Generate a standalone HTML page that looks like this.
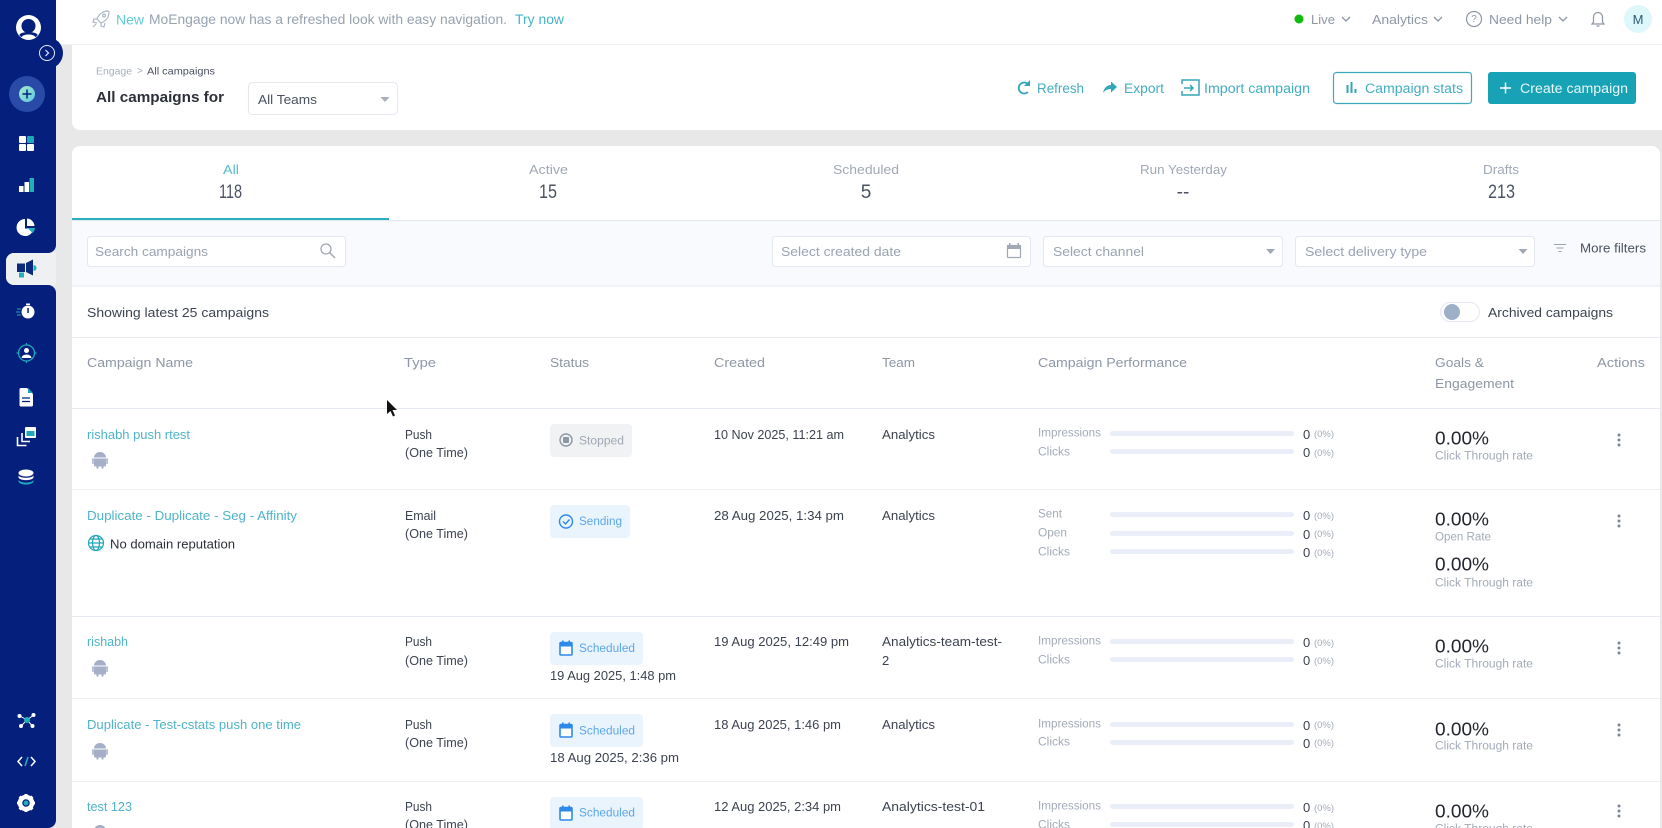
<!DOCTYPE html>
<html><head><meta charset="utf-8"><title>All campaigns</title>
<style>
html,body{margin:0;padding:0;width:1662px;height:828px;overflow:hidden;background:#e8e8e8}
svg{display:block;font-family:"Liberation Sans",sans-serif;filter:blur(.35px)}
text{dominant-baseline:central;white-space:pre;transform:translateY(.7px)}
.n{font-size:13px;fill:#4fb4c8}
.b{font-size:13px;fill:#3c4350}
.l{font-size:11.5px;fill:#a3abb8}
.h{font-size:13px;fill:#8e97a6}
.z{font-size:13px;fill:#3c4350}
.p{font-size:9.5px;fill:#a3abb8}
.r{font-size:18px;fill:#22262e}
.s{font-size:11.5px;fill:#a3abb8}
.t{font-size:13px;fill:#a0a8b5}
.c{font-size:19px;fill:#4a5261}
.f{font-size:13px;fill:#9aa3b2}
.a{font-size:13.5px;fill:#42aec0}
.g{font-size:13px;fill:#8e97a6}
.bar{fill:#e9eef8}
</style></head><body>
<svg width="1662" height="828" viewBox="0 0 1662 828" xmlns="http://www.w3.org/2000/svg">
<defs>
<g id="and"><path d="M-6 -2.5a6 5.5 0 0 1 12 0z M-6 -1.5h12v6.5a1.500 1.500 0 0 1-1.500 1.500h-9a1.500 1.500 0 0 1-1.500-1.500z" fill="#a5b0c8"/><rect x="-7.800" y="-2" width="1.500" height="6" rx=".8" fill="#a5b0c8"/><rect x="6.300" y="-2" width="1.500" height="6" rx=".8" fill="#a5b0c8"/><rect x="-3.500" y="6" width="2" height="2.500" fill="#a5b0c8"/><rect x="1.500" y="6" width="2" height="2.500" fill="#a5b0c8"/></g>
<g id="dots" fill="#7d8696"><circle cy="-5" r="1.500"/><circle r="1.500"/><circle cy="5" r="1.500"/></g>
<g id="cal"><rect x="-6" y="-5.500" width="12" height="12.500" rx="1" fill="#fff" stroke="#2d8ae8" stroke-width="1.600"/><rect x="-6" y="-5.500" width="12" height="4" fill="#2d8ae8"/><rect x="-4" y="-7.500" width="1.600" height="3" fill="#2d8ae8"/><rect x="2.400" y="-7.500" width="1.600" height="3" fill="#2d8ae8"/></g>
<path id="chev" d="M-4 -2l4 4 4-4" fill="none" stroke="#8e97a6" stroke-width="1.300"/>
<linearGradient id="pl" x1="0" y1="0" x2="1" y2="1"><stop offset="0" stop-color="#a8ecc8"/><stop offset="1" stop-color="#5cc6e8"/></linearGradient>
</defs>
<rect width="1662" height="828" fill="#e8e8e8"/>
<rect width="1662" height="44" fill="#fff"/>
<rect x="56" y="44" width="1606" height="1" fill="#eef0f3"/>
<g fill="none" stroke="#aeb8c6" stroke-width="1.200"><path d="M108 11c-5 0-9 3-11 8l4 4c5-2 8-6 8-11z"/><path d="M97 19l-3 0-1 3 4 1"/><path d="M101 23v3l3 1 1-4"/><path d="M96 24l-3 3"/><circle cx="104" cy="15.500" r="1.400"/></g>
<text x="116" y="19" font-size="14" fill="#5ecbdd" textLength="28" lengthAdjust="spacingAndGlyphs">New</text>
<text x="149" y="19" font-size="13.500" fill="#97a2b0" textLength="358" lengthAdjust="spacingAndGlyphs">MoEngage now has a refreshed look with easy navigation.</text>
<text x="515" y="19" font-size="13.500" fill="#45b3c7" textLength="49" lengthAdjust="spacingAndGlyphs">Try now</text>
<circle cx="1299" cy="19" r="4.500" fill="#0cbb0c"/>
<text x="1311" y="19" class="g" textLength="24" lengthAdjust="spacingAndGlyphs">Live</text><use href="#chev" x="1346" y="19"/>
<text x="1372" y="19" class="g" textLength="56" lengthAdjust="spacingAndGlyphs">Analytics</text><use href="#chev" x="1438" y="19"/>
<circle cx="1474" cy="19" r="7.500" fill="none" stroke="#8e97a6" stroke-width="1.200"/><text x="1474" y="19" font-size="10" fill="#8e97a6" text-anchor="middle">?</text>
<text x="1489" y="19" class="g" textLength="63" lengthAdjust="spacingAndGlyphs">Need help</text><use href="#chev" x="1563" y="19"/>
<path d="M1598 12.500a4.500 4.500 0 0 1 4.500 4.500v5l1.500 2h-12l1.500-2v-5a4.500 4.500 0 0 1 4.500-4.500zM1596.500 26h3" fill="none" stroke="#8e97a6" stroke-width="1.200"/>
<circle cx="1638" cy="19" r="14" fill="#def7fb"/><text x="1638" y="19" font-size="13" fill="#2c5a78" text-anchor="middle">M</text>

<path d="M72 45H1662V130H80a8 8 0 0 1-8-8z" fill="#fff"/>
<text x="96" y="71" font-size="10.500" fill="#a8afbb" textLength="36" lengthAdjust="spacingAndGlyphs">Engage</text>
<text x="137" y="71" font-size="10" fill="#a8afbb">&gt;</text>
<text x="147" y="71" font-size="10.500" fill="#4a5160" textLength="68" lengthAdjust="spacingAndGlyphs">All campaigns</text>
<text x="96" y="97" font-size="15" font-weight="700" fill="#2c3038" textLength="128" lengthAdjust="spacingAndGlyphs">All campaigns for</text>
<rect x="248.500" y="82.500" width="149" height="32" rx="4" fill="#fff" stroke="#e3e7f0"/>
<text x="258" y="99" font-size="13" fill="#4a5160" textLength="59" lengthAdjust="spacingAndGlyphs">All Teams</text>
<path d="M380.500 97h9l-4.500 5z" fill="#a8afbb"/>
<path d="M1028 84a5.500 5.500 0 1 0 0 8" fill="none" stroke="#33a6b9" stroke-width="1.800"/><path d="M1030 80v6h-6z" fill="#33a6b9"/>
<text x="1037" y="88" class="a" textLength="47" lengthAdjust="spacingAndGlyphs">Refresh</text>
<path d="M1103 93c1-6 5-8 8-8v-3.500l6 5.500-6 5.500v-3.500c-3 0-6 1-8 4z" fill="#33a6b9"/>
<text x="1124" y="88" class="a" textLength="40" lengthAdjust="spacingAndGlyphs">Export</text>
<path d="M1182 84v-4h17v15h-17v-4" fill="none" stroke="#33a6b9" stroke-width="1.500"/><path d="M1184 88h9m-3-3l3 3-3 3" fill="none" stroke="#33a6b9" stroke-width="1.500"/>
<text x="1204" y="88" class="a" textLength="106" lengthAdjust="spacingAndGlyphs">Import campaign</text>
<rect x="1333.500" y="72.500" width="138" height="31" rx="3" fill="#fff" stroke="#3ea9bc" stroke-width="1.200"/>
<path d="M1346.500 85v8h2v-8zM1350.500 82v11h2v-11zM1354.500 89v4h2v-4z" fill="#33a6b9"/>
<text x="1365" y="88" class="a" textLength="98" lengthAdjust="spacingAndGlyphs">Campaign stats</text>
<rect x="1488" y="72" width="148" height="32" rx="3" fill="#17a3b5"/>
<path d="M1500 88h11M1505.500 82.500v11" stroke="#fff" stroke-width="1.500"/>
<text x="1520" y="88" font-size="13.500" fill="#e8f8fa" textLength="108" lengthAdjust="spacingAndGlyphs">Create campaign</text>

<path d="M72 154a8 8 0 0 1 8-8H1652a8 8 0 0 1 8 8V828H72z" fill="#fff"/>
<text x="223" y="169" class="t" style="fill:#58bccd" textLength="16" lengthAdjust="spacingAndGlyphs">All</text>
<text x="219" y="192" class="c" textLength="23" lengthAdjust="spacingAndGlyphs">118</text>
<text x="529" y="169" class="t" textLength="39" lengthAdjust="spacingAndGlyphs">Active</text>
<text x="539" y="192" class="c" textLength="18" lengthAdjust="spacingAndGlyphs">15</text>
<text x="833" y="169" class="t" textLength="66" lengthAdjust="spacingAndGlyphs">Scheduled</text>
<text x="866" y="192" class="c" text-anchor="middle">5</text>
<text x="1140" y="169" class="t" textLength="87" lengthAdjust="spacingAndGlyphs">Run Yesterday</text>
<text x="1183" y="192" class="c" text-anchor="middle">--</text>
<text x="1483" y="169" class="t" textLength="36" lengthAdjust="spacingAndGlyphs">Drafts</text>
<text x="1488" y="192" class="c" textLength="27" lengthAdjust="spacingAndGlyphs">213</text>
<rect x="72" y="220" width="1588" height="66" fill="#f8fafd"/>
<rect x="72" y="220" width="1588" height="1" fill="#e3e7f0"/>
<rect x="72" y="218" width="317" height="2" fill="#28b0c2"/>
<rect x="72" y="285.500" width="1588" height="1" fill="#e6eaf2"/>
<rect x="87.500" y="236.500" width="258" height="30" rx="3" fill="#fff" stroke="#e3e7f0"/>
<text x="95" y="251" class="f" textLength="113" lengthAdjust="spacingAndGlyphs">Search campaigns</text>
<circle cx="326" cy="249" r="5" fill="none" stroke="#a0a8b5" stroke-width="1.300"/><path d="M330 253l5 5" stroke="#a0a8b5" stroke-width="1.500"/>
<rect x="772.500" y="236.500" width="258" height="30" rx="3" fill="#fff" stroke="#e3e7f0"/>
<text x="781" y="251" class="f" textLength="120" lengthAdjust="spacingAndGlyphs">Select created date</text>
<rect x="1007.500" y="245.500" width="13" height="12" rx="1" fill="none" stroke="#a0a8b5" stroke-width="1.200"/><rect x="1007" y="245" width="14" height="4" fill="#a0a8b5"/><rect x="1009" y="243" width="1.500" height="3" fill="#a0a8b5"/><rect x="1017.500" y="243" width="1.500" height="3" fill="#a0a8b5"/>
<rect x="1043.500" y="236.500" width="239" height="30" rx="3" fill="#fff" stroke="#e3e7f0"/>
<text x="1053" y="251" class="f" textLength="91" lengthAdjust="spacingAndGlyphs">Select channel</text>
<path d="M1266 249h9l-4.500 5z" fill="#a0a8b5"/>
<rect x="1295.500" y="236.500" width="239" height="30" rx="3" fill="#fff" stroke="#e3e7f0"/>
<text x="1305" y="251" class="f" textLength="122" lengthAdjust="spacingAndGlyphs">Select delivery type</text>
<path d="M1518.500 249h9l-4.500 5z" fill="#a0a8b5"/>
<path d="M1554 244.500h12M1556.500 248h7M1558.500 251.500h3" stroke="#9aa3b2" stroke-width="1.100"/>
<text x="1580" y="248" font-size="12.500" fill="#4a5160" textLength="66" lengthAdjust="spacingAndGlyphs">More filters</text>
<text x="87" y="312" class="z" textLength="182" lengthAdjust="spacingAndGlyphs">Showing latest 25 campaigns</text>
<rect x="1440.500" y="302.500" width="39" height="19" rx="9.500" fill="#fff" stroke="#e3e7f0"/>
<circle cx="1452" cy="312" r="8" fill="#9db0c8"/>
<text x="1488" y="312" class="z" textLength="125" lengthAdjust="spacingAndGlyphs">Archived campaigns</text>
<rect x="72" y="337" width="1588" height="1" fill="#e6eaf2"/>
<text x="87" y="362" class="h" textLength="106" lengthAdjust="spacingAndGlyphs">Campaign Name</text>
<text x="404" y="362" class="h" textLength="32" lengthAdjust="spacingAndGlyphs">Type</text>
<text x="550" y="362" class="h" textLength="39" lengthAdjust="spacingAndGlyphs">Status</text>
<text x="714" y="362" class="h" textLength="51" lengthAdjust="spacingAndGlyphs">Created</text>
<text x="882" y="362" class="h" textLength="33" lengthAdjust="spacingAndGlyphs">Team</text>
<text x="1038" y="362" class="h" textLength="149" lengthAdjust="spacingAndGlyphs">Campaign Performance</text>
<text x="1435" y="362" class="h" textLength="49" lengthAdjust="spacingAndGlyphs">Goals &amp;</text>
<text x="1435" y="383" class="h" textLength="79" lengthAdjust="spacingAndGlyphs">Engagement</text>
<text x="1597" y="362" class="h" textLength="48" lengthAdjust="spacingAndGlyphs">Actions</text>
<rect x="72" y="408" width="1588" height="1" fill="#e6eaf2"/>
<rect x="72" y="489" width="1588" height="1" fill="#eceff4"/>
<rect x="72" y="616" width="1588" height="1" fill="#e6eaf2"/>
<rect x="72" y="698" width="1588" height="1" fill="#eceff4"/>
<rect x="72" y="781" width="1588" height="1" fill="#eceff4"/>

<text x="87" y="434" class="n" textLength="103" lengthAdjust="spacingAndGlyphs">rishabh push rtest</text>
<use href="#and" x="100" y="460"/>
<text x="405" y="434" class="b" textLength="27" lengthAdjust="spacingAndGlyphs">Push</text>
<text x="405" y="452" class="b" textLength="63" lengthAdjust="spacingAndGlyphs">(One Time)</text>
<rect x="550" y="424" width="82" height="33" rx="4" fill="#f1f2f4"/>
<circle cx="566" cy="440" r="6" fill="none" stroke="#8e97a6" stroke-width="1.400"/><rect x="563" y="437" width="6" height="6" rx="1" fill="#8e97a6"/>
<text x="579" y="441" font-size="11.500" fill="#a0a8b5" textLength="45" lengthAdjust="spacingAndGlyphs">Stopped</text>
<text x="714" y="434" class="b" textLength="130" lengthAdjust="spacingAndGlyphs">10 Nov 2025, 11:21 am</text>
<text x="882" y="434" class="b" textLength="53" lengthAdjust="spacingAndGlyphs">Analytics</text>
<text x="1038" y="433" class="l" textLength="63" lengthAdjust="spacingAndGlyphs">Impressions</text>
<rect class="bar" x="1110" y="431" width="184" height="5" rx="2.500"/>
<text x="1303" y="434" font-size="13" fill="#3c4350">0</text><text x="1314" y="434" class="p" textLength="20" lengthAdjust="spacingAndGlyphs">(0%)</text>
<text x="1038" y="452" class="l" textLength="32" lengthAdjust="spacingAndGlyphs">Clicks</text>
<rect class="bar" x="1110" y="449" width="184" height="5" rx="2.500"/>
<text x="1303" y="452" font-size="13" fill="#3c4350">0</text><text x="1314" y="453" class="p" textLength="20" lengthAdjust="spacingAndGlyphs">(0%)</text>
<text x="1435" y="438" class="r" textLength="54" lengthAdjust="spacingAndGlyphs">0.00%</text>
<text x="1435" y="456" class="s" textLength="98" lengthAdjust="spacingAndGlyphs">Click Through rate</text>
<use href="#dots" x="1619" y="440"/>

<text x="87" y="515" class="n" textLength="210" lengthAdjust="spacingAndGlyphs">Duplicate - Duplicate - Seg - Affinity</text>
<g fill="none" stroke="#23a5ba" stroke-width="1.200"><circle cx="96" cy="543" r="7.500"/><ellipse cx="96" cy="543" rx="3.500" ry="7.500"/><path d="M88.500 543h15M89.500 539h13M89.500 547h13"/></g>
<text x="110" y="544" font-size="12.500" fill="#2c3038" textLength="125" lengthAdjust="spacingAndGlyphs">No domain reputation</text>
<text x="405" y="515" class="b" textLength="31" lengthAdjust="spacingAndGlyphs">Email</text>
<text x="405" y="533" class="b" textLength="63" lengthAdjust="spacingAndGlyphs">(One Time)</text>
<rect x="550" y="505" width="80" height="33" rx="4" fill="#eaf4fd"/>
<circle cx="566" cy="521.500" r="6.500" fill="none" stroke="#2d8ae8" stroke-width="1.400"/><path d="M563 521.500l2.500 2.500 4-4.500" fill="none" stroke="#2d8ae8" stroke-width="1.400"/>
<text x="579" y="521.500" font-size="11.500" fill="#5ba6ea" textLength="43" lengthAdjust="spacingAndGlyphs">Sending</text>
<text x="714" y="515" class="b" textLength="130" lengthAdjust="spacingAndGlyphs">28 Aug 2025, 1:34 pm</text>
<text x="882" y="515" class="b" textLength="53" lengthAdjust="spacingAndGlyphs">Analytics</text>
<text x="1038" y="514" class="l" textLength="24" lengthAdjust="spacingAndGlyphs">Sent</text>
<rect class="bar" x="1110" y="512" width="184" height="5" rx="2.500"/>
<text x="1303" y="515" font-size="13" fill="#3c4350">0</text><text x="1314" y="516" class="p" textLength="20" lengthAdjust="spacingAndGlyphs">(0%)</text>
<text x="1038" y="533" class="l" textLength="29" lengthAdjust="spacingAndGlyphs">Open</text>
<rect class="bar" x="1110" y="531" width="184" height="5" rx="2.500"/>
<text x="1303" y="534" font-size="13" fill="#3c4350">0</text><text x="1314" y="534" class="p" textLength="20" lengthAdjust="spacingAndGlyphs">(0%)</text>
<text x="1038" y="552" class="l" textLength="32" lengthAdjust="spacingAndGlyphs">Clicks</text>
<rect class="bar" x="1110" y="549" width="184" height="5" rx="2.500"/>
<text x="1303" y="552" font-size="13" fill="#3c4350">0</text><text x="1314" y="553" class="p" textLength="20" lengthAdjust="spacingAndGlyphs">(0%)</text>
<text x="1435" y="519" class="r" textLength="54" lengthAdjust="spacingAndGlyphs">0.00%</text>
<text x="1435" y="537" class="s" textLength="56" lengthAdjust="spacingAndGlyphs">Open Rate</text>
<text x="1435" y="564" class="r" textLength="54" lengthAdjust="spacingAndGlyphs">0.00%</text>
<text x="1435" y="583" class="s" textLength="98" lengthAdjust="spacingAndGlyphs">Click Through rate</text>
<use href="#dots" x="1619" y="521"/>

<text x="87" y="641" class="n" textLength="41" lengthAdjust="spacingAndGlyphs">rishabh</text>
<use href="#and" x="100" y="668"/>
<text x="405" y="641" class="b" textLength="27" lengthAdjust="spacingAndGlyphs">Push</text>
<text x="405" y="660" class="b" textLength="63" lengthAdjust="spacingAndGlyphs">(One Time)</text>
<rect x="550" y="632" width="93" height="33" rx="4" fill="#eaf4fd"/>
<use href="#cal" x="566" y="648"/>
<text x="579" y="648.500" font-size="11.500" fill="#5ba6ea" textLength="56" lengthAdjust="spacingAndGlyphs">Scheduled</text>
<text x="550" y="675" class="b" textLength="126" lengthAdjust="spacingAndGlyphs">19 Aug 2025, 1:48 pm</text>
<text x="714" y="641" class="b" textLength="135" lengthAdjust="spacingAndGlyphs">19 Aug 2025, 12:49 pm</text>
<text x="882" y="641" class="b" textLength="120" lengthAdjust="spacingAndGlyphs">Analytics-team-test-</text>
<text x="882" y="660" class="b">2</text>
<text x="1038" y="641" class="l" textLength="63" lengthAdjust="spacingAndGlyphs">Impressions</text>
<rect class="bar" x="1110" y="639" width="184" height="5" rx="2.500"/>
<text x="1303" y="642" font-size="13" fill="#3c4350">0</text><text x="1314" y="643" class="p" textLength="20" lengthAdjust="spacingAndGlyphs">(0%)</text>
<text x="1038" y="660" class="l" textLength="32" lengthAdjust="spacingAndGlyphs">Clicks</text>
<rect class="bar" x="1110" y="657" width="184" height="5" rx="2.500"/>
<text x="1303" y="660" font-size="13" fill="#3c4350">0</text><text x="1314" y="661" class="p" textLength="20" lengthAdjust="spacingAndGlyphs">(0%)</text>
<text x="1435" y="646" class="r" textLength="54" lengthAdjust="spacingAndGlyphs">0.00%</text>
<text x="1435" y="664" class="s" textLength="98" lengthAdjust="spacingAndGlyphs">Click Through rate</text>
<use href="#dots" x="1619" y="648"/>

<text x="87" y="724" class="n" textLength="214" lengthAdjust="spacingAndGlyphs">Duplicate - Test-cstats push one time</text>
<use href="#and" x="100" y="751"/>
<text x="405" y="724" class="b" textLength="27" lengthAdjust="spacingAndGlyphs">Push</text>
<text x="405" y="742" class="b" textLength="63" lengthAdjust="spacingAndGlyphs">(One Time)</text>
<rect x="550" y="714" width="93" height="33" rx="4" fill="#eaf4fd"/>
<use href="#cal" x="566" y="730"/>
<text x="579" y="731" font-size="11.500" fill="#5ba6ea" textLength="56" lengthAdjust="spacingAndGlyphs">Scheduled</text>
<text x="550" y="757" class="b" textLength="129" lengthAdjust="spacingAndGlyphs">18 Aug 2025, 2:36 pm</text>
<text x="714" y="724" class="b" textLength="127" lengthAdjust="spacingAndGlyphs">18 Aug 2025, 1:46 pm</text>
<text x="882" y="724" class="b" textLength="53" lengthAdjust="spacingAndGlyphs">Analytics</text>
<text x="1038" y="724" class="l" textLength="63" lengthAdjust="spacingAndGlyphs">Impressions</text>
<rect class="bar" x="1110" y="722" width="184" height="5" rx="2.500"/>
<text x="1303" y="725" font-size="13" fill="#3c4350">0</text><text x="1314" y="725" class="p" textLength="20" lengthAdjust="spacingAndGlyphs">(0%)</text>
<text x="1038" y="742" class="l" textLength="32" lengthAdjust="spacingAndGlyphs">Clicks</text>
<rect class="bar" x="1110" y="740" width="184" height="5" rx="2.500"/>
<text x="1303" y="743" font-size="13" fill="#3c4350">0</text><text x="1314" y="743" class="p" textLength="20" lengthAdjust="spacingAndGlyphs">(0%)</text>
<text x="1435" y="729" class="r" textLength="54" lengthAdjust="spacingAndGlyphs">0.00%</text>
<text x="1435" y="746" class="s" textLength="98" lengthAdjust="spacingAndGlyphs">Click Through rate</text>
<use href="#dots" x="1619" y="730"/>

<text x="87" y="806" class="n" textLength="45" lengthAdjust="spacingAndGlyphs">test 123</text>
<use href="#and" x="100" y="833"/>
<text x="405" y="806" class="b" textLength="27" lengthAdjust="spacingAndGlyphs">Push</text>
<text x="405" y="824" class="b" textLength="63" lengthAdjust="spacingAndGlyphs">(One Time)</text>
<rect x="550" y="797" width="93" height="33" rx="4" fill="#eaf4fd"/>
<use href="#cal" x="566" y="813"/>
<text x="579" y="813" font-size="11.500" fill="#5ba6ea" textLength="56" lengthAdjust="spacingAndGlyphs">Scheduled</text>
<text x="714" y="806" class="b" textLength="127" lengthAdjust="spacingAndGlyphs">12 Aug 2025, 2:34 pm</text>
<text x="882" y="806" class="b" textLength="103" lengthAdjust="spacingAndGlyphs">Analytics-test-01</text>
<text x="1038" y="806" class="l" textLength="63" lengthAdjust="spacingAndGlyphs">Impressions</text>
<rect class="bar" x="1110" y="804" width="184" height="5" rx="2.500"/>
<text x="1303" y="807" font-size="13" fill="#3c4350">0</text><text x="1314" y="808" class="p" textLength="20" lengthAdjust="spacingAndGlyphs">(0%)</text>
<text x="1038" y="825" class="l" textLength="32" lengthAdjust="spacingAndGlyphs">Clicks</text>
<rect class="bar" x="1110" y="822" width="184" height="5" rx="2.500"/>
<text x="1303" y="825" font-size="13" fill="#3c4350">0</text><text x="1314" y="826" class="p" textLength="20" lengthAdjust="spacingAndGlyphs">(0%)</text>
<text x="1435" y="811" class="r" textLength="54" lengthAdjust="spacingAndGlyphs">0.00%</text>
<text x="1435" y="829" class="s" textLength="98" lengthAdjust="spacingAndGlyphs">Click Through rate</text>
<use href="#dots" x="1619" y="811"/>

<path d="M387 400v14l3.500-3 2.500 5.500 2-1-2.500-5.500h4.500z" fill="#111"/>

<!-- sidebar -->
<path d="M0 0H56V245a8 8 0 0 1-8 8H14a8 8 0 0 0-8 8v16a8 8 0 0 0 8 8H48a8 8 0 0 1 8 8V820a8 8 0 0 1-8 8H0z" fill="#04207c"/>
<path d="M14 253H56V285H14a8 8 0 0 1-8-8V261a8 8 0 0 1 8-8z" fill="#eff0f1"/>
<circle cx="47" cy="53" r="16" fill="#04207c"/>
<circle cx="47" cy="53" r="7.500" fill="none" stroke="#e6ebf7" stroke-width="1"/><path d="M45.500 50l3 3-3 3" fill="none" stroke="#e6ebf7" stroke-width="1.200"/>
<!-- logo -->
<circle cx="28.500" cy="27.500" r="12.500" fill="#fff"/><circle cx="28.500" cy="26" r="7" fill="#04207c"/><ellipse cx="28.500" cy="35" rx="9" ry="3" fill="#04207c"/><ellipse cx="28.500" cy="37" rx="6.500" ry="2.500" fill="#fff"/>
<!-- plus -->
<circle cx="27" cy="94" r="18" fill="#2a4aa8"/><circle cx="27" cy="94" r="8" fill="url(#pl)"/><path d="M22.500 94h9M27 89.500v9" stroke="#04207c" stroke-width="1.500"/>
<!-- dashboard -->
<g fill="#fff"><rect x="19" y="136" width="7" height="7" rx="1"/><rect x="19" y="144" width="7" height="7" rx="1"/><rect x="27" y="144" width="7" height="7" rx="1"/></g><rect x="27" y="136" width="7" height="7" rx="1" fill="#1ea8b8"/>
<!-- chart -->
<rect x="19" y="186" width="4.500" height="6" fill="#fff"/><rect x="24.500" y="182" width="4.500" height="10" fill="#fff"/><rect x="29.500" y="178" width="4.500" height="14" fill="#20b0bc"/>
<!-- pie -->
<path d="M25 219a8.500 8.500 0 1 0 8.500 9.500h-8.500z" fill="#fff"/><path d="M27 218.500a8 8 0 0 1 7.500 7.500h-7.500z" fill="#fff"/><path d="M27.500 228h7.500a8 8 0 0 1-2.500 5z" fill="#20b0bc"/>
<!-- megaphone -->
<path d="M17 263.500h8v8.500h-8z" fill="#0a2a7c"/><path d="M26 263l7-3.500v16l-7-3.500z" fill="#0a2a7c"/><path d="M33.500 265a3 3 0 0 1 0 6z" fill="#20b0bc"/><rect x="19" y="272.500" width="5" height="5" fill="#20b0bc"/>
<!-- stopwatch -->
<circle cx="28" cy="312" r="6.500" fill="#fff"/><rect x="26" y="303.500" width="4" height="1.500" fill="#fff"/><rect x="27.300" y="308" width="1.500" height="5" fill="#04207c"/><path d="M17 309h4M16 312h4M17 315h4" stroke="#1fa4b6" stroke-width="1"/>
<!-- target -->
<circle cx="26.500" cy="353" r="8" fill="none" stroke="#1fa8b8" stroke-width="1.300"/><path d="M26.500 343v2.500M26.500 360.500v2.500M16.500 353h2.500M34 353h2.500" stroke="#1fa8b8" stroke-width="1.300"/><circle cx="26.500" cy="350.500" r="2.500" fill="#fff"/><path d="M21.500 358a5 3.500 0 0 1 10 0z" fill="#fff"/>
<!-- doc -->
<path d="M21 388h6l6 6v11a1.500 1.500 0 0 1-1.500 1.500h-10.500a1.500 1.500 0 0 1-1.500-1.500v-15.500a1.500 1.500 0 0 1 1.500-1.500z" fill="#fff"/><path d="M28 388l5 5h-5z" fill="#1fa8b8"/><path d="M22 398h8M22 401.500h8" stroke="#04207c" stroke-width="1.200"/>
<!-- stack -->
<rect x="25" y="427" width="11" height="11" rx="1" fill="#fff"/><rect x="26.500" y="431" width="8" height="5" fill="#1fa8b8"/><path d="M22 433v8.500h8" fill="none" stroke="#fff" stroke-width="1.600"/><path d="M17.500 437v8.500h9" fill="none" stroke="#fff" stroke-width="1.600"/>
<!-- db -->
<ellipse cx="26" cy="473" rx="7.500" ry="3.500" fill="#fff"/><path d="M18.500 475.500c1.500 3 13.500 3 15 0v2c-1.500 3.500-13.500 3.500-15 0z" fill="#fff"/><path d="M18.500 480c1.500 3.500 13.500 3.500 15 0v1.500c-1.500 4-13.500 4-15 0z" fill="#20b0bc"/>
<!-- hub -->
<g stroke="#fff" stroke-width="1"><path d="M27 720l-7-4M27 720l6-4.500M27 720l-5.500 5.500M27 720l5 5.500"/></g><g fill="#fff"><circle cx="19.500" cy="716" r="2"/><circle cx="33.500" cy="715" r="2"/><circle cx="21" cy="726" r="2"/><circle cx="32.500" cy="726" r="2"/></g><circle cx="27" cy="720" r="3" fill="#20b0bc"/>
<!-- code -->
<path d="M22 757l-4 4.500 4 4.500M31 757l4 4.500-4 4.500" fill="none" stroke="#fff" stroke-width="1.500"/><path d="M25 766l3-9" stroke="#20b0bc" stroke-width="1.500"/>
<!-- gear -->
<circle cx="26" cy="803" r="6" fill="none" stroke="#fff" stroke-width="4.500"/><g stroke="#fff" stroke-width="3"><path d="M26 794v3M26 809v3M17 803h3M32 803h3M19.600 796.600l2 2M30.400 807.400l2 2M19.600 809.400l2-2M30.400 798.600l2-2"/></g><circle cx="26" cy="803" r="2.500" fill="#20b0bc"/>
</svg>
</body></html>
